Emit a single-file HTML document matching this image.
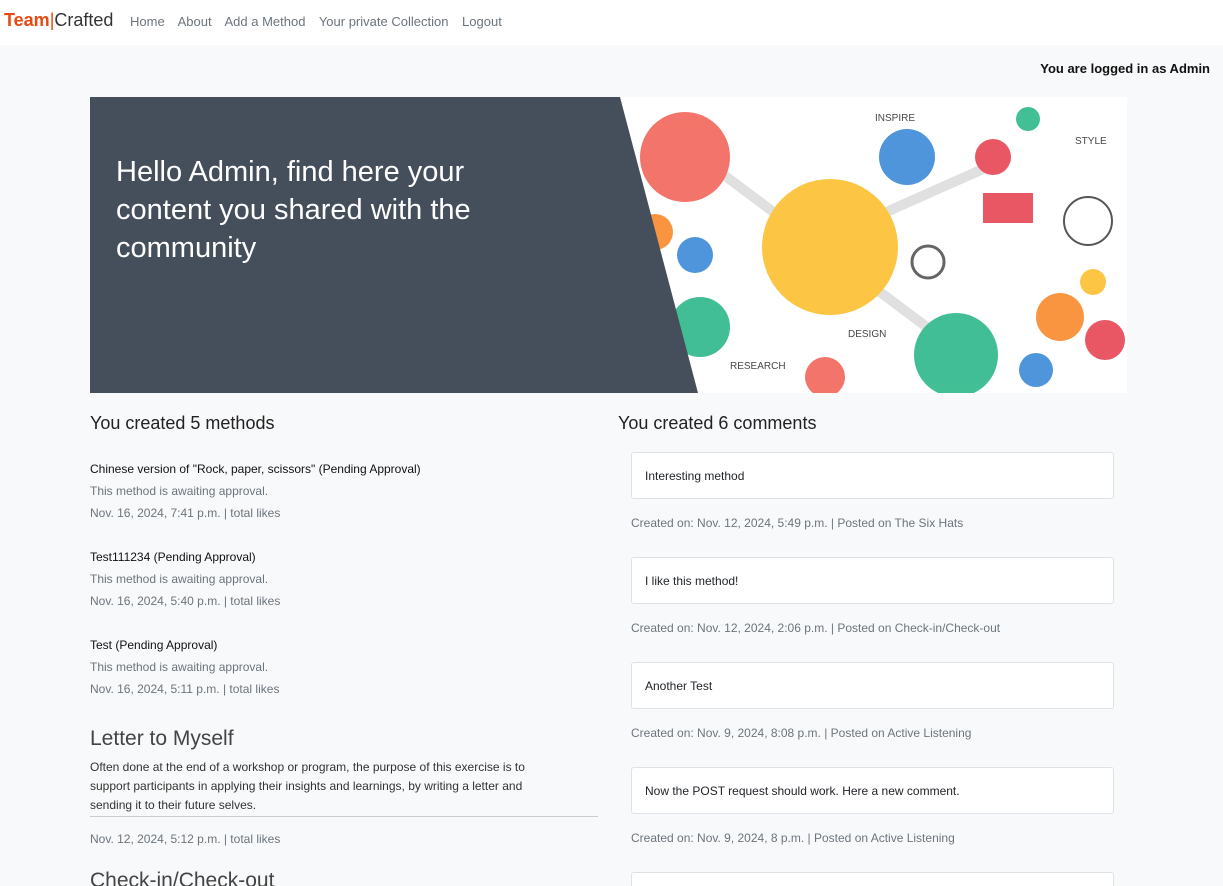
<!DOCTYPE html>
<html><head><meta charset="utf-8"><style>
*{box-sizing:border-box;margin:0;padding:0}
html,body{width:1223px;height:886px;overflow:hidden}
body{background:#f8f9fa;font-family:"Liberation Sans",sans-serif;color:#212529;position:relative}
nav{height:45px;background:#fff;position:relative}
.brand{position:absolute;left:4px;top:10px;font-size:18px;color:#333}
.brand b{color:#e8490f}
.brand i{font-style:normal;color:#e8490f;font-weight:300}
.links{position:absolute;left:130px;top:14px;font-size:13px;color:#6c757d}
.links span{margin-right:10px}
.login{position:absolute;right:13px;top:61px;font-size:13px;font-weight:bold;color:#111}
.hero{position:absolute;left:90px;top:97px;width:1037px;height:296px;background:#fff;overflow:hidden}
.hero h1{position:absolute;left:26px;top:56px;font-size:29px;font-weight:normal;color:#fff;line-height:38px;width:420px}
.col{position:absolute;top:412px}
h2{font-size:18px;font-weight:normal;color:#222;line-height:22px}
.m{font-size:12px;line-height:14px;margin-top:30px}
.m .t{color:#111}
.m .g{color:#6c757d;margin-top:8px}
.big{font-size:21px;line-height:26px;color:#444;margin-top:30px}
.desc{font-size:12px;color:#333;line-height:19px;width:508px;border-bottom:1px solid #ccc;padding-bottom:1px;padding-right:45px;margin-top:6px}
.c{width:483px;height:47px;margin-left:13px;background:#fff;border:1px solid #dee2e6;border-radius:3px;font-size:12px;padding:16px 13px}
.cm{font-size:12px;line-height:14px;color:#6c757d;margin:17px 0 27px 13px}
</style></head><body>
<nav><div class="brand"><b>Team</b><i>|</i>Crafted</div>
<div class="links"><span>Home</span> <span>About</span> <span>Add a Method</span> <span>Your private Collection</span> <span>Logout</span></div></nav>
<div class="login">You are logged in as Admin</div>
<div class="hero">
<svg width="1037" height="296" style="position:absolute;left:0;top:0">
<g opacity="0.9">
<line x1="610" y1="60" x2="850" y2="240" stroke="#ddd" stroke-width="10"/>
<line x1="740" y1="140" x2="920" y2="60" stroke="#ddd" stroke-width="10"/>
<circle cx="595" cy="60" r="45" fill="#f2665a"/>
<circle cx="605" cy="158" r="18" fill="#3b8ad9"/>
<circle cx="565" cy="135" r="18" fill="#f98a2c"/>
<circle cx="740" cy="150" r="68" fill="#fcbf2f"/>
<circle cx="817" cy="60" r="28" fill="#3b8ad9"/>
<circle cx="903" cy="60" r="18" fill="#e64553"/>
<circle cx="938" cy="22" r="12" fill="#2db88a"/>
<rect x="893" y="96" width="50" height="30" fill="#e64553"/>
<circle cx="970" cy="220" r="24" fill="#f98a2c"/>
<circle cx="1003" cy="185" r="13" fill="#fcbf2f"/>
<circle cx="1015" cy="243" r="20" fill="#e64553"/>
<circle cx="866" cy="258" r="42" fill="#2db88a"/>
<circle cx="946" cy="273" r="17" fill="#3b8ad9"/>
<circle cx="610" cy="230" r="30" fill="#2db88a"/>
<circle cx="735" cy="280" r="20" fill="#f2665a"/>
<circle cx="998" cy="124" r="24" fill="none" stroke="#444" stroke-width="2"/>
<circle cx="838" cy="165" r="16" fill="none" stroke="#555" stroke-width="3"/>
<text x="785" y="24" font-size="10" fill="#333" font-family="Liberation Sans">INSPIRE</text>
<text x="985" y="47" font-size="10" fill="#333" font-family="Liberation Sans">STYLE</text>
<text x="758" y="240" font-size="10" fill="#333" font-family="Liberation Sans">DESIGN</text>
<text x="640" y="272" font-size="10" fill="#333" font-family="Liberation Sans">RESEARCH</text>
</g>
<polygon points="0,0 530,0 608,296 0,296" fill="#454f5c"/>
</svg>
<h1>Hello Admin, find here your content you shared with the community</h1>
</div>
<div class="col" style="left:90px;width:510px">
<h2>You created 5 methods</h2>
<div class="m" style="margin-top:28px"><div class="t">Chinese version of "Rock, paper, scissors" (Pending Approval)</div><div class="g">This method is awaiting approval.</div><div class="g">Nov. 16, 2024, 7:41 p.m. | total likes</div></div>
<div class="m"><div class="t">Test111234 (Pending Approval)</div><div class="g">This method is awaiting approval.</div><div class="g">Nov. 16, 2024, 5:40 p.m. | total likes</div></div>
<div class="m"><div class="t">Test (Pending Approval)</div><div class="g">This method is awaiting approval.</div><div class="g">Nov. 16, 2024, 5:11 p.m. | total likes</div></div>
<div class="big">Letter to Myself</div>
<div class="desc">Often done at the end of a workshop or program, the purpose of this exercise is to support participants in applying their insights and learnings, by writing a letter and sending it to their future selves.</div>
<div class="m" style="margin-top:15px"><div class="g" style="margin:0">Nov. 12, 2024, 5:12 p.m. | total likes</div></div>
<div class="big" style="margin-top:22px">Check-in/Check-out</div>
</div>
<div class="col" style="left:618px;width:510px">
<h2>You created 6 comments</h2>
<div style="height:18px"></div>
<div class="c">Interesting method</div><div class="cm">Created on: Nov. 12, 2024, 5:49 p.m. | Posted on The Six Hats</div>
<div class="c">I like this method!</div><div class="cm">Created on: Nov. 12, 2024, 2:06 p.m. | Posted on Check-in/Check-out</div>
<div class="c">Another Test</div><div class="cm">Created on: Nov. 9, 2024, 8:08 p.m. | Posted on Active Listening</div>
<div class="c">Now the POST request should work. Here a new comment.</div><div class="cm">Created on: Nov. 9, 2024, 8 p.m. | Posted on Active Listening</div>
<div class="c"></div>
</div>
</body></html>
